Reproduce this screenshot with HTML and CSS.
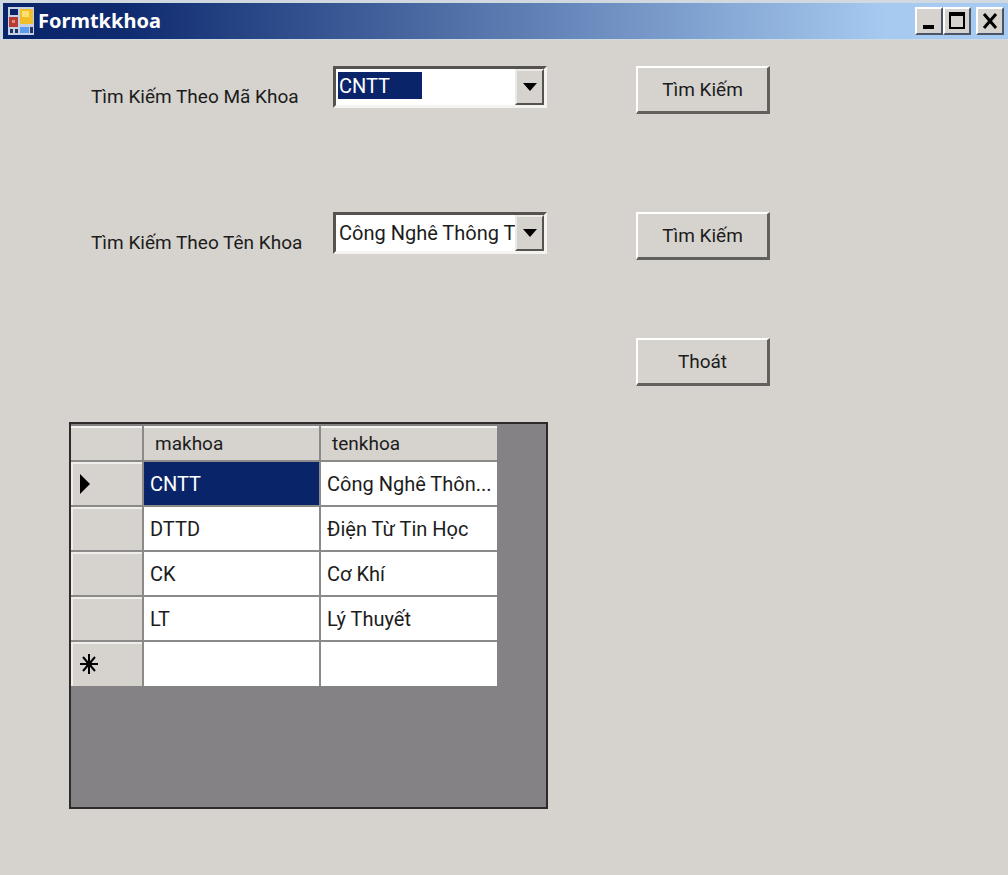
FILE: index.html
```html
<!DOCTYPE html>
<html lang="vi">
<head>
<meta charset="utf-8">
<meta name="viewport" content="width=device-width, initial-scale=1">
<title>Formtkkhoa</title>
<link rel="stylesheet" href="styles.css">
</head>
<body>
<header class="titlebar">
  <svg class="app-icon" viewBox="0 0 26 28" aria-hidden="true">
    <rect width="26" height="28" fill="#c4d0e4"/>
    <rect x="2" y="2" width="8" height="6" fill="#0c2466"/>
    <rect x="1" y="10" width="9" height="10" fill="#b83a34"/>
    <rect x="4" y="13" width="3" height="3" fill="#ec8a78"/>
    <rect x="12" y="2" width="13" height="15" fill="#f0be28"/>
    <rect x="14" y="4" width="7" height="6" fill="#fce070"/>
    <rect x="12" y="20" width="9" height="6" fill="#5e9cf0"/>
    <rect x="2" y="22" width="3" height="4" fill="#24345c"/>
    <rect x="7" y="22" width="3" height="4" fill="#24345c"/>
    <rect x="22" y="20" width="3" height="6" fill="#24345c"/>
  </svg>
  <h1 class="title">Formtkkhoa</h1>
  <div class="window-buttons">
    <button class="window-button" type="button" aria-label="Minimize">
      <svg viewBox="0 0 24 24"><path d="M6 18h11" stroke="#000" stroke-width="4"/></svg>
    </button>
    <button class="window-button" type="button" aria-label="Maximize">
      <svg viewBox="0 0 24 24"><path d="M5 4v15h14V4" fill="none" stroke="#000" stroke-width="2"/><path d="M4 5h16" stroke="#000" stroke-width="4"/></svg>
    </button>
    <button class="window-button window-close" type="button" aria-label="Close">
      <svg viewBox="0 0 24 24"><path d="M6 5l12 14M18 5L6 19" stroke="#000" stroke-width="3"/></svg>
    </button>
  </div>
</header>
<main class="content">
  <form class="search">
    <div class="search-row">
      <label class="label" for="code">Tìm Kiếm Theo Mã Khoa</label>
      <div class="combo">
        <select class="select select-active" id="code"><option>CNTT</option><option>DTTD</option><option>CK</option><option>LT</option></select>
        <span class="arrow"><svg viewBox="0 0 14 8" aria-hidden="true"><path d="M0 0h14L7 8z"/></svg></span>
      </div>
      <button class="button" type="button">Tìm Kiếm</button>
    </div>
    <div class="search-row">
      <label class="label" for="name">Tìm Kiếm Theo Tên Khoa</label>
      <div class="combo">
        <select class="select" id="name"><option>Công Nghê Thông T</option><option>Điện Từ Tin Học</option><option>Cơ Khí</option><option>Lý Thuyết</option></select>
        <span class="arrow"><svg viewBox="0 0 14 8" aria-hidden="true"><path d="M0 0h14L7 8z"/></svg></span>
      </div>
      <button class="button" type="button">Tìm Kiếm</button>
    </div>
    <div class="search-row search-exit">
      <button class="button" type="button">Thoát</button>
    </div>
  </form>
  <section class="grid-panel" aria-label="Khoa">
    <table class="data">
      <colgroup><col class="col-marker"><col class="col-data"><col class="col-data"></colgroup>
      <thead>
        <tr><th></th><th scope="col">makhoa</th><th scope="col">tenkhoa</th></tr>
      </thead>
      <tbody>
        <tr><th class="marker"><svg class="current" viewBox="0 0 10 20"><path d="M0 0l10 10L0 20z"/></svg></th><td class="selected">CNTT</td><td>Công Nghê Thôn...</td></tr>
        <tr><th class="marker"></th><td>DTTD</td><td>Điện Từ Tin Học</td></tr>
        <tr><th class="marker"></th><td>CK</td><td>Cơ Khí</td></tr>
        <tr><th class="marker"></th><td>LT</td><td>Lý Thuyết</td></tr>
        <tr><th class="marker"><svg class="new" viewBox="0 0 18 20"><path d="M9 0v20M0 10h18M3 3l12 14M15 3L3 17" stroke="#000" stroke-width="2"/><circle cx="9" cy="10" r="3"/></svg></th><td></td><td></td></tr>
      </tbody>
    </table>
  </section>
</main>
</body>
</html>
```
FILE: styles.css
```css
* { box-sizing: border-box; }

body {
  margin: 0;
  min-height: 100vh;
  background: #d6d3ce;
  color: #1c1c1c;
  font: 20px/28px Roboto, "Liberation Sans", sans-serif;
}

button, select { font: inherit; color: inherit; }
svg { display: block; }

.titlebar {
  display: flex;
  align-items: center;
  height: 40px;
  padding: 0 4px 0 5px;
  border: solid #d0d8e0;
  border-width: 3px 0 1px 3px;
  background: linear-gradient(90deg, #0a246a 0%, #0f2b70 12%, #a6caf0 88%);
}
.app-icon { width: 26px; height: 28px; }
.title {
  flex: 1;
  margin: 0 0 0 4px;
  color: #fff;
  font: bold 20px/28px "Noto Sans", "Open Sans", sans-serif;
}
.window-buttons { display: flex; }
.window-button {
  width: 28px;
  height: 28px;
  padding: 0;
  border: 2px solid;
  border-color: #fff #4c5468 #4c5468 #fff;
  background: #d6d3ce;
}
.window-button svg { width: 24px; height: 24px; }
.window-close { margin-left: 5px; }

.content { padding: 26px 69px; }
.search { padding-left: 22px; }
.search-row {
  display: grid;
  grid-template-columns: 242px 214px 89px 134px;
  align-items: start;
  height: 146px;
}
.search-row:nth-child(2) { height: 126px; }
.search-exit { height: 84px; }
.label {
  padding-top: 17px;
  font-size: 19px;
  white-space: nowrap;
}

.combo {
  display: grid;
  grid-template-columns: 1fr 29px;
  height: 42px;
  border: 3px solid;
  border-color: #55524f #f4f3f0 #f4f3f0 #55524f;
  background: #fff;
}
.select {
  grid-area: 1 / 1 / 2 / 3;
  width: 100%;
  min-width: 0;
  padding: 0 29px 0 3px;
  border: 0;
  border-radius: 0;
  outline: 0;
  appearance: none;
  background: transparent;
}
.select-active {
  padding-bottom: 3px;
  background: linear-gradient(#0a246a, #0a246a) 2px 3px / 84px 27px no-repeat;
  color: #fff;
}
.select option { color: #1c1c1c; background: #fff; }
.arrow {
  grid-area: 1 / 2;
  display: grid;
  place-items: center;
  border: 2px solid;
  border-color: #eceae6 #55524f #55524f #eceae6;
  background: #d6d3ce;
  pointer-events: none;
}
.arrow svg { width: 14px; height: 8px; }

.button {
  grid-column: 4;
  height: 48px;
  padding: 0;
  border: solid;
  border-width: 2px 3px 3px 2px;
  border-color: #fff #62605d #62605d #fff;
  background: #d6d3ce;
  font-size: 19px;
}

.grid-panel {
  width: 479px;
  max-width: 100%;
  min-height: 387px;
  padding: 2px 0;
  border: 2px solid #2e2a2a;
  background: #848284;
}
.data {
  table-layout: fixed;
  width: 426px;
  border-collapse: collapse;
}
.col-marker { width: 72px; }
.col-data { width: 177px; }
.data th, .data td {
  height: 45px;
  padding: 0 6px;
  border: solid #8c8a88;
  border-width: 0 2px 2px 0;
  background: #fff;
  text-align: left;
  font-weight: normal;
  white-space: nowrap;
}
.data th { background: #d6d3ce; }
.data thead th {
  height: 35px;
  padding: 2px 11px 0;
  box-shadow: inset 0 2px #f4f3f0;
  font-size: 19px;
}
.data tr > :last-child { border-right: 0; }
.data tbody tr:last-child > * { border-bottom: 0; }
.data .marker { padding: 0 9px; box-shadow: inset 2px 2px #f0eeea; }
.data .selected { background: #0a246a; color: #fff; }
.current { width: 10px; height: 20px; }
.new { width: 18px; height: 20px; }
```
